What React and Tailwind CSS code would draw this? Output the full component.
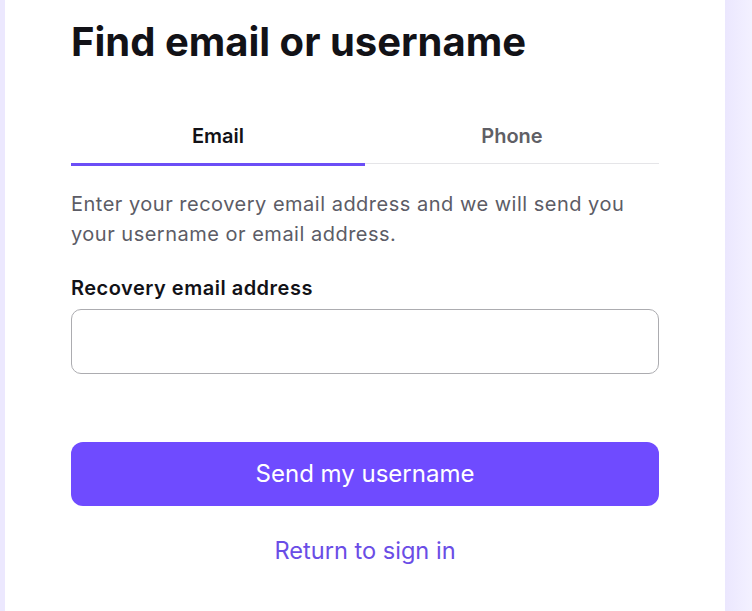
import { useState } from "react";

export default function App() {
  const [tab, setTab] = useState("email");
  const [email, setEmail] = useState("");

  return (
    <div className="flex w-full min-h-[611px] bg-[#ece8fe] pl-[5px] font-['Inter',sans-serif]">
      {/* Card */}
      <div className="w-[720px] shrink-0 bg-white pl-[66px] pr-[66px] pt-[18px]">
        <h1 className="text-[40px] leading-[48px] font-bold text-[#121217]">
          Find email or username
        </h1>

        {/* Tabs */}
        <div className="mt-[56px] flex items-start">
          <button
            onClick={() => setTab("email")}
            className={`flex-1 pb-[13px] text-[20px] leading-[28px] font-semibold ${
              tab === "email"
                ? "text-[#121217] border-b-[3px] border-[#6b4ef6]"
                : "text-[#5f5f66] border-b border-[#e5e5e8]"
            }`}>
            Email
          </button>
          <button
            onClick={() => setTab("phone")}
            className={`flex-1 pb-[13px] text-[20px] leading-[28px] font-semibold ${
              tab === "phone"
                ? "text-[#121217] border-b-[3px] border-[#6b4ef6]"
                : "text-[#5f5f66] border-b border-[#e5e5e8]"
            }`}>
            Phone
          </button>
        </div>

        <p className="mt-[23px] text-[20px] leading-[30px] tracking-[0.5px] text-[#5c5c66]">
          Enter your recovery email address and we will send you your username or email address.
        </p>

        <label className="block mt-[25px] text-[20px] leading-[28px] tracking-[0.5px] font-semibold text-[#121217]">
          Recovery email address
        </label>
        <input
          type="email"
          value={email}
          onChange={e => setEmail(e.target.value)}
          className="mt-[7px] block w-full h-[65px] px-4 rounded-[10px] border border-[#acacb0] outline-none text-[20px]"
        />

        <button className="mt-[68px] w-full h-[64px] rounded-[12px] bg-[#6f4bff] text-white text-[24px] leading-[30px]">
          Send my username
        </button>

        <div className="mt-[30px] text-center">
          <a href="#" className="text-[23.6px] leading-[30px] text-[#6a4de6]">
            Return to sign in
          </a>
        </div>
      </div>

      {/* Right side backdrop */}
      <div className="flex-1 bg-gradient-to-r from-[#ebe7fe] to-[#f3f1ff]" />
    </div>
  );
}
